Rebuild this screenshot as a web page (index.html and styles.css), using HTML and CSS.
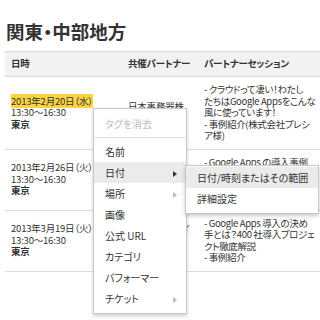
FILE: index.html
```html
<!DOCTYPE html>
<html lang="ja">
<head>
  <meta charset="UTF-8">
  <title>関東・中部地方</title>
  <link rel="stylesheet" href="styles.css">
</head>
<body>
  <h1 class="region-title">関東・中部地方</h1>

  <!-- event schedule -->
  <table class="schedule">
    <thead>
      <tr>
        <th class="col-date">日時</th>
        <th class="col-partner">共催パートナー</th>
        <th class="col-session">パートナーセッション</th>
      </tr>
    </thead>
    <tbody>
      <tr>
        <td class="col-date"><span class="picked">2013年2月20日（水）</span><br>13:30〜16:30<br><b>東京</b></td>
        <td class="col-partner">日本事務器株式会社</td>
        <td class="col-session">- クラウドって凄い！わたし<br>たちはGoogle Appsをこんな<br>風に使っています！<br>- 事例紹介(株式会社プレシ<br>ア様)</td>
      </tr>
      <tr>
        <td class="col-date">2013年2月26日（火）<br>13:30〜16:30<br><b>東京</b></td>
        <td class="col-partner">株式会社トップゲート</td>
        <td class="col-session">- Google Apps の導入事例<br>と活用方法のご紹介<br>- 事例紹介(株式会社<br>様)</td>
      </tr>
      <tr>
        <td class="col-date">2013年3月19日（火）<br>13:30〜16:30<br><b>東京</b></td>
        <td class="col-partner">株式会社ブレインコン<br>サルティング</td>
        <td class="col-session">- Google Apps 導入の決め<br>手とは？400 社導入プロジェ<br>クト徹底解説<br>- 事例紹介</td>
      </tr>
    </tbody>
  </table>

  <!-- right click menu -->
  <div class="context-menu">
    <div class="menu-item is-disabled">タグを消去</div>
    <div class="menu-sep"></div>
    <div class="menu-item">名前</div>
    <div class="menu-item has-sub is-active">日付</div>
    <div class="menu-item has-sub">場所</div>
    <div class="menu-item">画像</div>
    <div class="menu-item">公式 URL</div>
    <div class="menu-item">カテゴリ</div>
    <div class="menu-item">パフォーマー</div>
    <div class="menu-item has-sub">チケット</div>
  </div>

  <div class="context-menu submenu">
    <div class="menu-item is-active">日付/時刻またはその範囲</div>
    <div class="menu-item">詳細設定</div>
  </div>
</body>
</html>
```

FILE: styles.css
```css
body {
  margin: 0;
  width: 320px;
  height: 320px;
  overflow: hidden;
  position: relative;
  background: #fff;
  color: #333;
  font-family: "Noto Sans CJK JP", "Noto Sans", sans-serif;
  font-feature-settings: "palt";
}

.region-title {
  margin: 0;
  padding: 20px 0 0 6px;
  font-size: 18.5px;
  line-height: 22px;
  font-weight: bold;
  color: #333;
}

/* table */
.schedule {
  margin: 9px 0 0 5px;
  width: 340px;
  border-collapse: collapse;
  table-layout: fixed;
  font-size: 9.5px;
  line-height: 11.5px;
  letter-spacing: -0.2px;
}
.schedule th {
  height: 24px;
  padding: 0 6px;
  text-align: left;
  font-weight: bold;
  white-space: nowrap;
  background: #f2f2f2;
  border-top: 1px solid #d6d6d6;
  border-bottom: 1px solid #d6d6d6;
}
.schedule td {
  padding: 7px 6px;
  vertical-align: middle;
  border-bottom: 1px solid #dcdcdc;
}
.col-date {
  width: 105px;
}
.col-partner {
  width: 64px;
}
.schedule td.col-session {
  white-space: nowrap;
  letter-spacing: -0.35px;
}
.picked {
  background: #fbd443;
}

/* menus */
.context-menu {
  position: absolute;
  left: 93px;
  top: 108px;
  width: 94px;
  box-sizing: border-box;
  padding: 4px 0;
  background: #fff;
  border: 1px solid #c8c8c8;
  box-shadow: 0 2px 4px rgba(0, 0, 0, 0.2);
  font-size: 10px;
  color: #333;
}
.submenu {
  left: 185px;
  top: 165px;
  width: 134px;
  padding: 1px 0 4px;
}
.menu-item {
  display: flex;
  justify-content: space-between;
  align-items: center;
  height: 21px;
  padding: 0 9px 0 11px;
  white-space: nowrap;
}
.menu-item.is-active {
  background: #ebebeb;
}
.menu-item.is-disabled {
  color: #bdbdbd;
}
.has-sub::after {
  content: "";
  margin-top: 3px;
  border-left: 4px solid #bbb;
  border-top: 3px solid transparent;
  border-bottom: 3px solid transparent;
}
.has-sub.is-active::after {
  border-left-color: #333;
}
.menu-sep {
  height: 1px;
  margin: 3px 0;
  background: #e2e2e2;
}
```
